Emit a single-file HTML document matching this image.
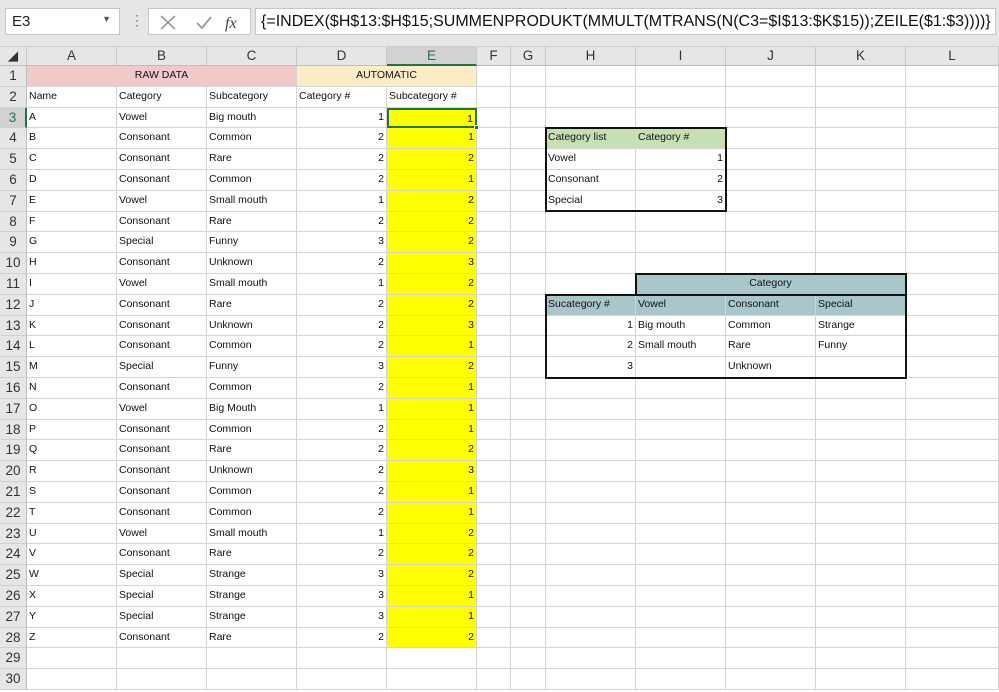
<!DOCTYPE html>
<html><head><meta charset="utf-8"><style>
*{margin:0;padding:0;box-sizing:border-box}
body{width:999px;height:692px;overflow:hidden;background:#fff;font-family:"Liberation Sans",Arial,sans-serif;position:relative}
#top{position:absolute;left:0;top:0;width:999px;height:47px;background:#e6e6e6;border-bottom:1px solid #cfcfcf}
#nb{position:absolute;left:5px;top:8px;width:115px;height:27px;background:#fff;border:1px solid #c6c6c6;font-size:15px;padding:4px 6px;color:#222}
#nb span{position:absolute;right:8px;top:5px;font-size:9px;color:#555}
#dots{position:absolute;left:130px;top:12px;font-size:14px;color:#777}
#fx{position:absolute;left:148px;top:8px;width:103px;height:27px;background:#fff;border:1px solid #c6c6c6}
#fi{position:absolute;left:255px;top:8px;width:741px;height:27px;background:#fff;border:1px solid #c6c6c6;font-size:16px;padding:4px 5px;color:#111;white-space:nowrap}
#grid{position:absolute;left:0;top:47px}
.r{display:flex;height:20.8px}
.h{height:19px}
.c{border-right:1px solid #d4d4d4;border-bottom:1px solid #d4d4d4;font-size:10.5px;line-height:19px;padding:0 2px;white-space:nowrap;overflow:hidden;color:#111}
.n{text-align:right}
.rh{width:27px;background:#e6e6e6;color:#333;font-size:13.5px;text-align:center;padding:0;border-right:1px solid #bdbdbd;border-bottom:1px solid #d0d0d0}
.ch{background:#e6e6e6;color:#333;font-size:13.5px;text-align:center;line-height:18px;border-right:1px solid #c8c8c8;border-bottom:1px solid #bdbdbd}
.a{width:90px}.f{width:34px}.g{width:35px}.l{width:93px}
.y{background:#ffff00}
.gr{background:#c6e0b4}
.tl{background:#a9c7cb}
.bx{position:absolute;border:2px solid #111}
</style></head><body>
<div id="top">
<div id="nb">E3<span>▼</span></div>
<div id="dots">⋮</div>
<div id="fx"><svg width="103" height="27"><path d="M12 7 L26 20 M26 7 L12 20" stroke="#999" stroke-width="1.6"/><path d="M48 14 L53 19 L62 8" stroke="#999" stroke-width="1.8" fill="none"/><text x="76" y="19" font-family="Liberation Serif,serif" font-style="italic" font-size="16" fill="#444">fx</text></svg></div>
<div id="fi">{=INDEX($H$13:$H$15;SUMMENPRODUKT(MMULT(MTRANS(N(C3=$I$13:$K$15));ZEILE($1:$3))))}</div>
</div>
<div id="grid">
<div class="r h"><div class="c ch rh" style="background:#e6e6e6">◢</div><div class="c ch a">A</div><div class="c ch a">B</div><div class="c ch a">C</div><div class="c ch a">D</div><div class="c ch a" style="background:#d2d2d2;border-bottom:2px solid #217346;color:#217346">E</div><div class="c ch f">F</div><div class="c ch g">G</div><div class="c ch a">H</div><div class="c ch a">I</div><div class="c ch a">J</div><div class="c ch a">K</div><div class="c ch l">L</div></div>
<div class="r"><div class="c rh">1</div><div class="c" style="width:270px;background:#f2c9c9;text-align:center">RAW DATA</div><div class="c" style="width:180px;background:#fdecc8;text-align:center">AUTOMATIC</div><div class="c f"></div><div class="c g"></div><div class="c a"></div><div class="c a"></div><div class="c a"></div><div class="c a"></div><div class="c l"></div></div>
<div class="r"><div class="c rh">2</div><div class="c a">Name</div><div class="c a">Category</div><div class="c a">Subcategory</div><div class="c a">Category #</div><div class="c a">Subcategory #</div><div class="c f"></div><div class="c g"></div><div class="c a"></div><div class="c a"></div><div class="c a"></div><div class="c a"></div><div class="c l"></div></div>
<div class="r"><div class="c rh" style="background:#d2d2d2;color:#217346;border-right:2px solid #217346">3</div><div class="c a">A</div><div class="c a">Vowel</div><div class="c a">Big mouth</div><div class="c a n">1</div><div class="c a n y" style="border:2px solid #217346">1</div><div class="c f"></div><div class="c g"></div><div class="c a"></div><div class="c a"></div><div class="c a"></div><div class="c a"></div><div class="c l"></div></div>
<div class="r"><div class="c rh">4</div><div class="c a">B</div><div class="c a">Consonant</div><div class="c a">Common</div><div class="c a n">2</div><div class="c a n y">1</div><div class="c f"></div><div class="c g"></div><div class="c a gr">Category list</div><div class="c a gr">Category #</div><div class="c a"></div><div class="c a"></div><div class="c l"></div></div>
<div class="r"><div class="c rh">5</div><div class="c a">C</div><div class="c a">Consonant</div><div class="c a">Rare</div><div class="c a n">2</div><div class="c a n y">2</div><div class="c f"></div><div class="c g"></div><div class="c a">Vowel</div><div class="c a n">1</div><div class="c a"></div><div class="c a"></div><div class="c l"></div></div>
<div class="r"><div class="c rh">6</div><div class="c a">D</div><div class="c a">Consonant</div><div class="c a">Common</div><div class="c a n">2</div><div class="c a n y">1</div><div class="c f"></div><div class="c g"></div><div class="c a">Consonant</div><div class="c a n">2</div><div class="c a"></div><div class="c a"></div><div class="c l"></div></div>
<div class="r"><div class="c rh">7</div><div class="c a">E</div><div class="c a">Vowel</div><div class="c a">Small mouth</div><div class="c a n">1</div><div class="c a n y">2</div><div class="c f"></div><div class="c g"></div><div class="c a">Special</div><div class="c a n">3</div><div class="c a"></div><div class="c a"></div><div class="c l"></div></div>
<div class="r"><div class="c rh">8</div><div class="c a">F</div><div class="c a">Consonant</div><div class="c a">Rare</div><div class="c a n">2</div><div class="c a n y">2</div><div class="c f"></div><div class="c g"></div><div class="c a"></div><div class="c a"></div><div class="c a"></div><div class="c a"></div><div class="c l"></div></div>
<div class="r"><div class="c rh">9</div><div class="c a">G</div><div class="c a">Special</div><div class="c a">Funny</div><div class="c a n">3</div><div class="c a n y">2</div><div class="c f"></div><div class="c g"></div><div class="c a"></div><div class="c a"></div><div class="c a"></div><div class="c a"></div><div class="c l"></div></div>
<div class="r"><div class="c rh">10</div><div class="c a">H</div><div class="c a">Consonant</div><div class="c a">Unknown</div><div class="c a n">2</div><div class="c a n y">3</div><div class="c f"></div><div class="c g"></div><div class="c a"></div><div class="c a"></div><div class="c a"></div><div class="c a"></div><div class="c l"></div></div>
<div class="r"><div class="c rh">11</div><div class="c a">I</div><div class="c a">Vowel</div><div class="c a">Small mouth</div><div class="c a n">1</div><div class="c a n y">2</div><div class="c f"></div><div class="c g"></div><div class="c a"></div><div class="c tl" style="width:270px;text-align:center">Category</div><div class="c l"></div></div>
<div class="r"><div class="c rh">12</div><div class="c a">J</div><div class="c a">Consonant</div><div class="c a">Rare</div><div class="c a n">2</div><div class="c a n y">2</div><div class="c f"></div><div class="c g"></div><div class="c a tl">Sucategory #</div><div class="c a tl">Vowel</div><div class="c a tl">Consonant</div><div class="c a tl">Special</div><div class="c l"></div></div>
<div class="r"><div class="c rh">13</div><div class="c a">K</div><div class="c a">Consonant</div><div class="c a">Unknown</div><div class="c a n">2</div><div class="c a n y">3</div><div class="c f"></div><div class="c g"></div><div class="c a n">1</div><div class="c a">Big mouth</div><div class="c a">Common</div><div class="c a">Strange</div><div class="c l"></div></div>
<div class="r"><div class="c rh">14</div><div class="c a">L</div><div class="c a">Consonant</div><div class="c a">Common</div><div class="c a n">2</div><div class="c a n y">1</div><div class="c f"></div><div class="c g"></div><div class="c a n">2</div><div class="c a">Small mouth</div><div class="c a">Rare</div><div class="c a">Funny</div><div class="c l"></div></div>
<div class="r"><div class="c rh">15</div><div class="c a">M</div><div class="c a">Special</div><div class="c a">Funny</div><div class="c a n">3</div><div class="c a n y">2</div><div class="c f"></div><div class="c g"></div><div class="c a n">3</div><div class="c a"></div><div class="c a">Unknown</div><div class="c a"></div><div class="c l"></div></div>
<div class="r"><div class="c rh">16</div><div class="c a">N</div><div class="c a">Consonant</div><div class="c a">Common</div><div class="c a n">2</div><div class="c a n y">1</div><div class="c f"></div><div class="c g"></div><div class="c a"></div><div class="c a"></div><div class="c a"></div><div class="c a"></div><div class="c l"></div></div>
<div class="r"><div class="c rh">17</div><div class="c a">O</div><div class="c a">Vowel</div><div class="c a">Big Mouth</div><div class="c a n">1</div><div class="c a n y">1</div><div class="c f"></div><div class="c g"></div><div class="c a"></div><div class="c a"></div><div class="c a"></div><div class="c a"></div><div class="c l"></div></div>
<div class="r"><div class="c rh">18</div><div class="c a">P</div><div class="c a">Consonant</div><div class="c a">Common</div><div class="c a n">2</div><div class="c a n y">1</div><div class="c f"></div><div class="c g"></div><div class="c a"></div><div class="c a"></div><div class="c a"></div><div class="c a"></div><div class="c l"></div></div>
<div class="r"><div class="c rh">19</div><div class="c a">Q</div><div class="c a">Consonant</div><div class="c a">Rare</div><div class="c a n">2</div><div class="c a n y">2</div><div class="c f"></div><div class="c g"></div><div class="c a"></div><div class="c a"></div><div class="c a"></div><div class="c a"></div><div class="c l"></div></div>
<div class="r"><div class="c rh">20</div><div class="c a">R</div><div class="c a">Consonant</div><div class="c a">Unknown</div><div class="c a n">2</div><div class="c a n y">3</div><div class="c f"></div><div class="c g"></div><div class="c a"></div><div class="c a"></div><div class="c a"></div><div class="c a"></div><div class="c l"></div></div>
<div class="r"><div class="c rh">21</div><div class="c a">S</div><div class="c a">Consonant</div><div class="c a">Common</div><div class="c a n">2</div><div class="c a n y">1</div><div class="c f"></div><div class="c g"></div><div class="c a"></div><div class="c a"></div><div class="c a"></div><div class="c a"></div><div class="c l"></div></div>
<div class="r"><div class="c rh">22</div><div class="c a">T</div><div class="c a">Consonant</div><div class="c a">Common</div><div class="c a n">2</div><div class="c a n y">1</div><div class="c f"></div><div class="c g"></div><div class="c a"></div><div class="c a"></div><div class="c a"></div><div class="c a"></div><div class="c l"></div></div>
<div class="r"><div class="c rh">23</div><div class="c a">U</div><div class="c a">Vowel</div><div class="c a">Small mouth</div><div class="c a n">1</div><div class="c a n y">2</div><div class="c f"></div><div class="c g"></div><div class="c a"></div><div class="c a"></div><div class="c a"></div><div class="c a"></div><div class="c l"></div></div>
<div class="r"><div class="c rh">24</div><div class="c a">V</div><div class="c a">Consonant</div><div class="c a">Rare</div><div class="c a n">2</div><div class="c a n y">2</div><div class="c f"></div><div class="c g"></div><div class="c a"></div><div class="c a"></div><div class="c a"></div><div class="c a"></div><div class="c l"></div></div>
<div class="r"><div class="c rh">25</div><div class="c a">W</div><div class="c a">Special</div><div class="c a">Strange</div><div class="c a n">3</div><div class="c a n y">2</div><div class="c f"></div><div class="c g"></div><div class="c a"></div><div class="c a"></div><div class="c a"></div><div class="c a"></div><div class="c l"></div></div>
<div class="r"><div class="c rh">26</div><div class="c a">X</div><div class="c a">Special</div><div class="c a">Strange</div><div class="c a n">3</div><div class="c a n y">1</div><div class="c f"></div><div class="c g"></div><div class="c a"></div><div class="c a"></div><div class="c a"></div><div class="c a"></div><div class="c l"></div></div>
<div class="r"><div class="c rh">27</div><div class="c a">Y</div><div class="c a">Special</div><div class="c a">Strange</div><div class="c a n">3</div><div class="c a n y">1</div><div class="c f"></div><div class="c g"></div><div class="c a"></div><div class="c a"></div><div class="c a"></div><div class="c a"></div><div class="c l"></div></div>
<div class="r"><div class="c rh">28</div><div class="c a">Z</div><div class="c a">Consonant</div><div class="c a">Rare</div><div class="c a n">2</div><div class="c a n y">2</div><div class="c f"></div><div class="c g"></div><div class="c a"></div><div class="c a"></div><div class="c a"></div><div class="c a"></div><div class="c l"></div></div>
<div class="r"><div class="c rh">29</div><div class="c a"></div><div class="c a"></div><div class="c a"></div><div class="c a"></div><div class="c a"></div><div class="c f"></div><div class="c g"></div><div class="c a"></div><div class="c a"></div><div class="c a"></div><div class="c a"></div><div class="c l"></div></div>
<div class="r"><div class="c rh">30</div><div class="c a"></div><div class="c a"></div><div class="c a"></div><div class="c a"></div><div class="c a"></div><div class="c f"></div><div class="c g"></div><div class="c a"></div><div class="c a"></div><div class="c a"></div><div class="c a"></div><div class="c l"></div></div>
</div>
<div class="bx" style="left:545px;top:127px;width:182px;height:85px"></div>
<div class="bx" style="left:635px;top:273px;width:272px;height:23px"></div>
<div class="bx" style="left:545px;top:294px;width:362px;height:85px"></div>
<div style="position:absolute;left:474px;top:125px;width:5px;height:5px;background:#217346;border:1px solid #fff"></div>
</body></html>
